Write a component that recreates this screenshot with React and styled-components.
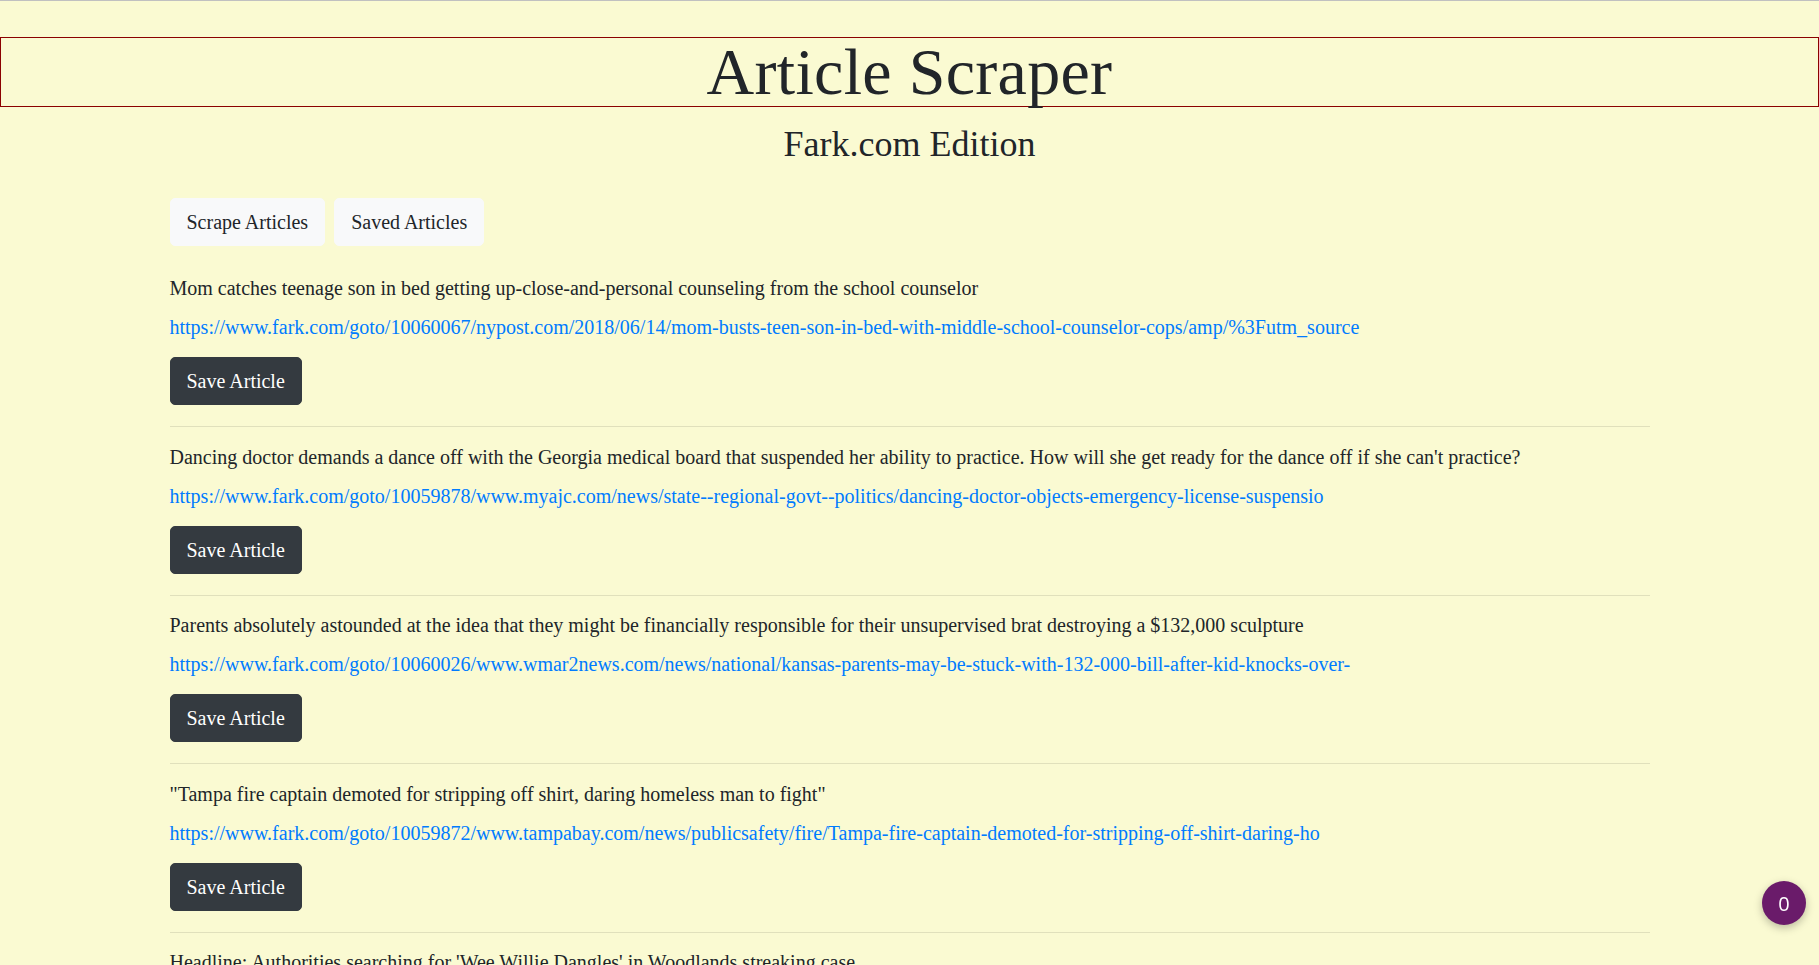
// Article Scraper page - Fark.com edition

import styled, { createGlobalStyle } from "styled-components";

const GlobalStyle = createGlobalStyle`
  * { box-sizing: border-box; }
  html, body {
    margin: 0;
    padding: 0;
  }
  body {
    background-color: #fafad2;
    color: #212529;
    font-family: "Liberation Serif", "Times New Roman", serif;
    font-size: 20px;
    border-top: 1px solid #c0c0c0;
  }
`;

const Page = styled.div`
  display: flex;
  flex-direction: column;
`;

const TitleBar = styled.header`
  margin-top: 36px;
  border: 1px solid #8b0000;
  height: 70px;
  display: flex;
  justify-content: center;
  align-items: center;
`;

const Title = styled.h1`
  margin: 0;
  font-weight: 400;
  font-size: 66px;
  line-height: 68px;
  letter-spacing: 0.3px;
  color: #212529;
`;

const SubTitle = styled.h2`
  margin: 15px 0 0;
  text-align: center;
  font-weight: 400;
  font-size: 36px;
  line-height: 44px;
  color: #212529;
`;

const Container = styled.main`
  width: 1480px;
  margin: 0 auto;
  padding-top: 32px;
`;

const Nav = styled.nav`
  display: flex;
  gap: 9px;
  margin-bottom: 27px;
`;

const Btn = styled.button`
  font-family: inherit;
  font-size: 20px;
  line-height: 30px;
  padding: 8px 16px;
  border-radius: 5px;
  cursor: pointer;
  border: 1px solid ${(p) => (p.$dark ? "#343a40" : "#f8f9fa")};
  background-color: ${(p) => (p.$dark ? "#343a40" : "#f8f9fa")};
  color: ${(p) => (p.$dark ? "#fff" : "#212529")};
`;

const Article = styled.article`
  display: flex;
  flex-direction: column;
  align-items: flex-start;
`;

const Headline = styled.p`
  margin: 0 0 9px;
  line-height: 30px;
`;

const Link = styled.a`
  color: #007bff;
  text-decoration: none;
  line-height: 30px;
  margin-bottom: 15px;
`;

const Rule = styled.hr`
  width: 100%;
  margin: 21px 0 14.6px;
  border: 0;
  border-top: 1px solid rgba(0, 0, 0, 0.1);
`;

const Badge = styled.div`
  position: fixed;
  right: 13px;
  bottom: 40px;
  width: 44px;
  height: 44px;
  border-radius: 50%;
  background-color: #6a1b6a;
  color: #fff;
  font-family: "Open Sans", sans-serif;
  font-size: 20px;
  display: flex;
  align-items: center;
  justify-content: center;
  box-shadow: 0 3px 8px rgba(0, 0, 0, 0.25);
`;

const articles = [
  {
    title:
      "Mom catches teenage son in bed getting up-close-and-personal counseling from the school counselor",
    url: "https://www.fark.com/goto/10060067/nypost.com/2018/06/14/mom-busts-teen-son-in-bed-with-middle-school-counselor-cops/amp/%3Futm_source",
  },
  {
    title:
      "Dancing doctor demands a dance off with the Georgia medical board that suspended her ability to practice. How will she get ready for the dance off if she can't practice?",
    url: "https://www.fark.com/goto/10059878/www.myajc.com/news/state--regional-govt--politics/dancing-doctor-objects-emergency-license-suspensio",
  },
  {
    title:
      "Parents absolutely astounded at the idea that they might be financially responsible for their unsupervised brat destroying a $132,000 sculpture",
    url: "https://www.fark.com/goto/10060026/www.wmar2news.com/news/national/kansas-parents-may-be-stuck-with-132-000-bill-after-kid-knocks-over-",
  },
  {
    title:
      '"Tampa fire captain demoted for stripping off shirt, daring homeless man to fight"',
    url: "https://www.fark.com/goto/10059872/www.tampabay.com/news/publicsafety/fire/Tampa-fire-captain-demoted-for-stripping-off-shirt-daring-ho",
  },
  {
    title:
      "Headline: Authorities searching for 'Wee Willie Dangles' in Woodlands streaking case",
    url: "https://www.fark.com/goto/10059990/www.chron.com/neighborhood/woodlands/news/article/Authorities-searching-for-Wee-Willie-Dangles",
  },
];

const App = () => {
  return (
    <Page>
      <GlobalStyle />
      <TitleBar>
        <Title>Article Scraper</Title>
      </TitleBar>
      <SubTitle>Fark.com Edition</SubTitle>

      <Container>
        <Nav>
          <Btn>Scrape Articles</Btn>
          <Btn>Saved Articles</Btn>
        </Nav>

        {articles.map((a) => (
          <Article key={a.url}>
            <Headline>{a.title}</Headline>
            <Link href="#">{a.url}</Link>
            <Btn $dark>Save Article</Btn>
            <Rule />
          </Article>
        ))}
      </Container>

      <Badge>0</Badge>
    </Page>
  );
};

export default App;
